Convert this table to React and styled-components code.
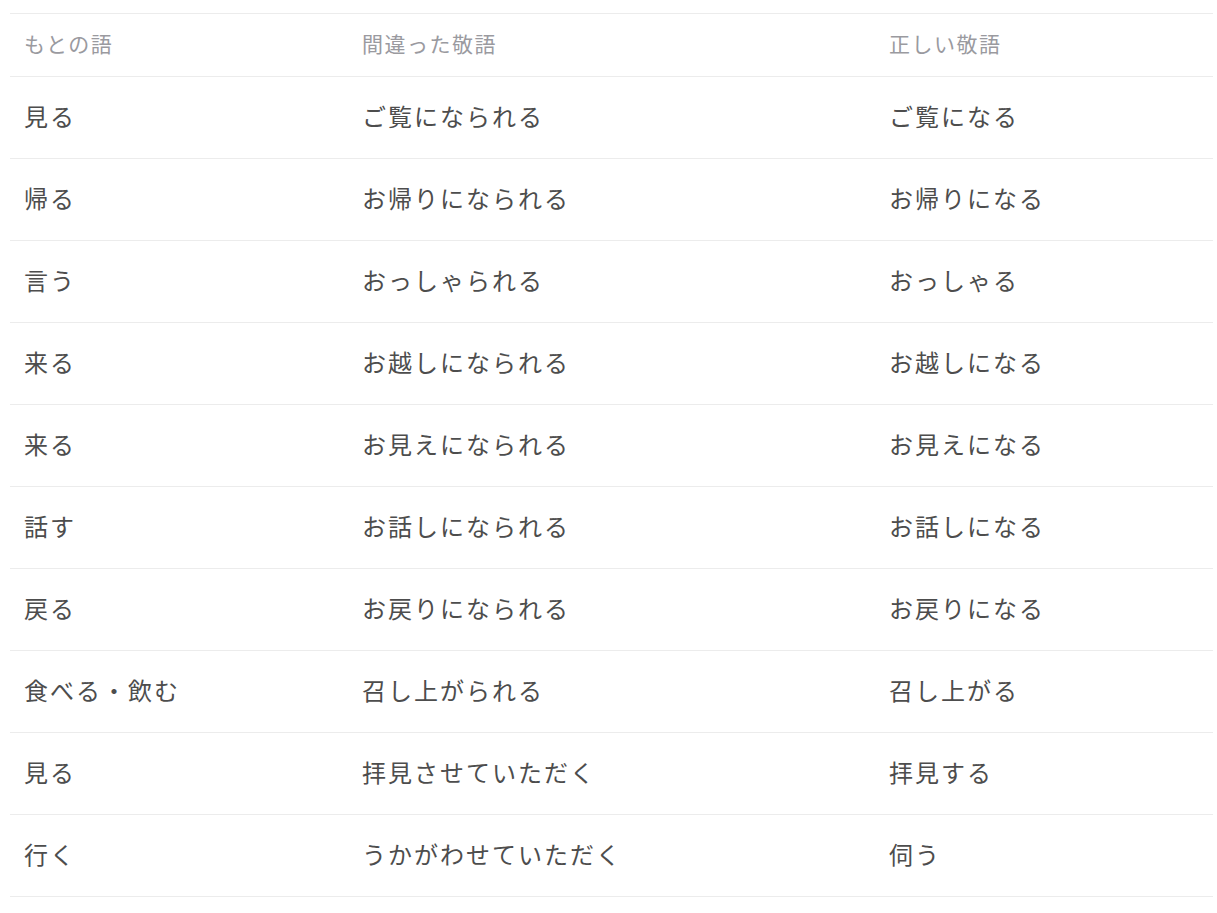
import React from "react";
import styled, { createGlobalStyle } from "styled-components";

const Global = createGlobalStyle`
  html, body { margin: 0; padding: 0; background: #fff; }
  body { font-family: "Noto Sans CJK JP", "Noto Sans", sans-serif; }
`;

const Wrap = styled.div`
  padding: 13px 4px 0 10px;
`;

const Table = styled.table`
  width: 1203px;
  border-collapse: collapse;
  table-layout: fixed;
  border-top: 1px solid #ececec;
`;

const Col = styled.col`
  width: ${(p) => p.$w}px;
`;

const HeadCell = styled.th`
  height: 58px;
  padding: 0 15px 4px 14px;
  text-align: left;
  font-weight: 400;
  font-size: 21px;
  line-height: 1;
  letter-spacing: 1.5px;
  color: #9a9a9f;
  border-bottom: 1px solid #ececec;
  vertical-align: middle;
`;

const Cell = styled.td`
  height: 77px;
  padding: 0 15px 4px 14px;
  font-size: 24px;
  line-height: 1;
  letter-spacing: 2px;
  color: #4d4d4d;
  border-bottom: 1px solid #ececec;
  vertical-align: middle;
`;

const rows = [
  ["見る", "ご覧になられる", "ご覧になる"],
  ["帰る", "お帰りになられる", "お帰りになる"],
  ["言う", "おっしゃられる", "おっしゃる"],
  ["来る", "お越しになられる", "お越しになる"],
  ["来る", "お見えになられる", "お見えになる"],
  ["話す", "お話しになられる", "お話しになる"],
  ["戻る", "お戻りになられる", "お戻りになる"],
  ["食べる・飲む", "召し上がられる", "召し上がる"],
  ["見る", "拝見させていただく", "拝見する"],
  ["行く", "うかがわせていただく", "伺う"],
];

export default function App() {
  return (
    <Wrap>
      <Global />
      <Table>
        <colgroup>
          <Col $w={338} />
          <Col $w={527} />
          <Col $w={338} />
        </colgroup>
        <thead>
          <tr>
            <HeadCell>もとの語</HeadCell>
            <HeadCell>間違った敬語</HeadCell>
            <HeadCell>正しい敬語</HeadCell>
          </tr>
        </thead>
        <tbody>
          {rows.map((r, i) => (
            <tr key={i}>
              {r.map((c, j) => (
                <Cell key={j}>{c}</Cell>
              ))}
            </tr>
          ))}
        </tbody>
      </Table>
    </Wrap>
  );
}
